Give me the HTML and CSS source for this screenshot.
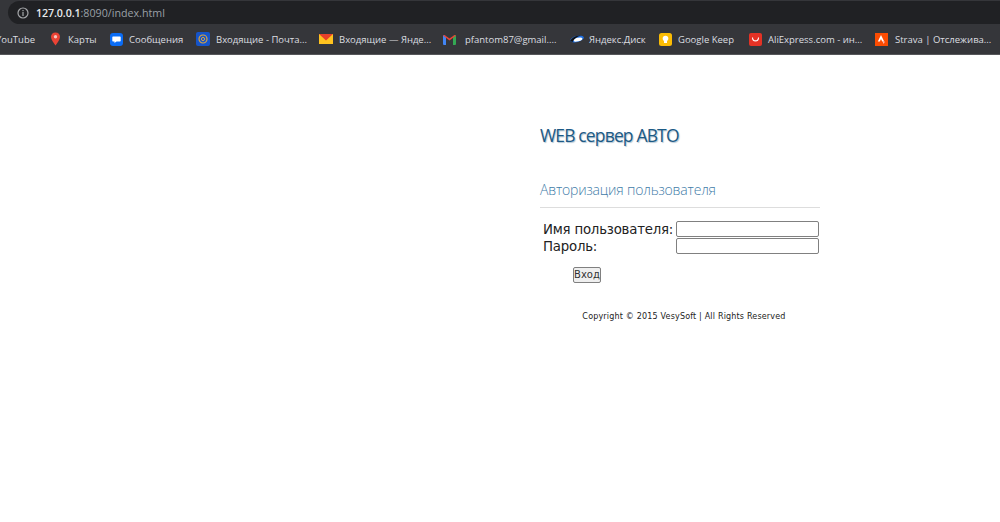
FILE: index.html
```html
<!DOCTYPE html>
<html lang="ru">
<head>
<meta charset="utf-8">
<title>WEB сервер АВТО</title>
<link rel="stylesheet" href="styles.css">
</head>
<body>
<header class="chrome">
  <div class="address-row">
    <div class="omnibox">
      <svg class="info" viewBox="0 0 12 12" width="12" height="12"><circle cx="6" cy="6" r="5" fill="none" stroke="#a5a7aa" stroke-width="1.2"/><rect x="5.4" y="5" width="1.2" height="4" fill="#a5a7aa"/><rect x="5.4" y="3" width="1.2" height="1.2" fill="#a5a7aa"/></svg>
      <span class="url"><b>127.0.0.1</b>:8090/index.html</span>
    </div>
  </div>
  <nav class="bookmarks">
    <a class="bm bm-yt"><span>YouTube</span></a>
    <a class="bm w-maps"><svg viewBox="0 0 13 14" width="13" height="14"><path d="M6.5 0.5C3.7 0.5 2 2.5 2 4.8 2 8 6.5 13.5 6.5 13.5S11 8 11 4.8C11 2.5 9.3 0.5 6.5 0.5z" fill="#ea4335"/><circle cx="6.5" cy="4.8" r="1.7" fill="#f6c6c0"/></svg><span>Карты</span></a>
    <a class="bm w-msg"><svg viewBox="0 0 13 13" width="13" height="13"><rect width="13" height="13" rx="3" fill="#0a6cf5"/><path d="M3 3.5h7a.7.7 0 0 1 .7.7v3.6a.7.7 0 0 1-.7.7H6.5L4.5 10V8.500H3a.7.7 0 0 1-.7-.7V4.200A.7.7 0 0 1 3 3.500z" fill="#fff"/></svg><span>Сообщения</span></a>
    <a class="bm w-mail"><svg viewBox="0 0 14 14" width="14" height="14"><rect width="14" height="14" rx="2" fill="#1554c9"/><circle cx="7" cy="7" r="4" fill="none" stroke="#d9a441" stroke-width="1.2"/><circle cx="7" cy="7" r="1.6" fill="none" stroke="#d9a441" stroke-width="1"/></svg><span>Входящие - Почта...</span></a>
    <a class="bm w-yamail"><svg viewBox="0 0 14 12" width="14" height="12"><rect y="1" width="14" height="10" fill="#ffc31f"/><path d="M0 1h14L7 7.500z" fill="#e8402a"/></svg><span>Входящие — Янде...</span></a>
    <a class="bm w-gmail"><svg viewBox="0 0 13 11" width="13" height="11"><path d="M0 1.500 1.500 1 3 2.500V11H1a1 1 0 0 1-1-1z" fill="#4285f4"/><path d="M13 1.500 11.500 1 10 2.500V11h2a1 1 0 0 0 1-1z" fill="#34a853"/><path d="M0 1.500 6.500 6.500 13 1.500 11.500 1 6.500 4.500 1.500 1z" fill="#ea4335"/></svg><span>pfantom87@gmail....</span></a>
    <a class="bm w-disk"><svg viewBox="0 0 14 8" width="14" height="8"><ellipse cx="7" cy="4" rx="7" ry="3" fill="#1f6fe0" transform="rotate(-14 7 4)"/><ellipse cx="8" cy="4.600" rx="4.500" ry="1.800" fill="#fff" transform="rotate(-14 8 4.600)"/><path d="M0 6C3 1.500 7 .5 11 .5 7 1.500 4 4 2.500 7z" fill="#111"/></svg><span>Яндекс.Диск</span></a>
    <a class="bm w-keep"><svg viewBox="0 0 13 13" width="13" height="13"><rect width="13" height="13" rx="2.500" fill="#fbbc04"/><circle cx="6.500" cy="5.500" r="2.800" fill="#fff"/><rect x="5" y="8" width="3" height="2" fill="#fff"/></svg><span>Google Keep</span></a>
    <a class="bm w-ali"><svg viewBox="0 0 13 13" width="13" height="13"><rect width="13" height="13" rx="2" fill="#e43225"/><path d="M3.500 4.500C3.500 9 9.500 9 9.500 4.500" fill="none" stroke="#fff" stroke-width="1.100"/></svg><span>AliExpress.com - ин...</span></a>
    <a class="bm w-strava"><svg viewBox="0 0 13 13" width="13" height="13"><rect width="13" height="13" fill="#fc4c02"/><path d="M6 2 2.800 8.500h2L6 6l1.200 2.500h2z" fill="#fff"/><path d="M7.500 8.500 8.700 11l1.200-2.500z" fill="#fbb"/></svg><span>Strava | Отслежива...</span></a>
  </nav>
</header>
<main class="page">
  <section class="panel">
    <h1 class="title">WEB сервер АВТО</h1>
    <h2 class="subtitle">Авторизация пользователя</h2>
    <form class="login">
      <div class="fields">
        <label class="lbl" for="u">Имя пользователя:</label><input class="inp" id="u" type="text">
        <label class="lbl" for="p">Пароль:</label><input class="inp" id="p" type="password">
      </div>
      <button class="btn" type="button">Вход</button>
    </form>
    <p class="copy">Copyright © 2015 VesySoft | All Rights Reserved</p>
  </section>
</main>
</body>
</html>
```
FILE: styles.css
```css
* { box-sizing: border-box; }
html, body { margin: 0; padding: 0; height: 100%; overflow: hidden; background: #fff; }
body { font-family: "DejaVu Sans", sans-serif; }

.chrome { height: 55px; background: #35363a; border-bottom: 1px solid #56575a; }
.address-row { height: 24px; padding: 1px 0 0 8px; }
.omnibox { height: 23px; background: #202124; border-radius: 12px 0 0 12px; display: flex; align-items: center; padding-left: 9px; gap: 7px; }
.url { font: 10.7px "Open Sans", sans-serif; color: #9aa0a6; }
.url b { font-weight: 600; color: #e8eaed; letter-spacing: -0.1px; }

.bookmarks { height: 30px; display: flex; align-items: center; overflow: hidden; font: 9.500px "Open Sans", sans-serif; color: #dcdee0; }
.bm { display: flex; align-items: center; gap: 7px; flex: none; white-space: nowrap; }
.bm svg { flex: none; }
.bm-yt { width: 53px; margin-left: -4px; }
.w-maps { width: 61px; gap: 6px; }
.w-msg { width: 86px; gap: 6px; }
.w-mail { width: 123px; gap: 6px; }
.w-yamail { width: 124px; gap: 6px; }
.w-gmail { width: 127px; gap: 9px; }
.w-disk { width: 89px; gap: 5px; }
.w-keep { width: 90px; gap: 6px; }
.w-ali { width: 126px; gap: 6px; }
.w-strava { width: 125px; gap: 7px; }

.page { padding-left: 540px; }
.panel { width: 280px; }
.title { margin: 0; padding-top: 67px; font: 400 17.500px/27px "Open Sans", sans-serif; letter-spacing: -0.85px; color: #1c5a85; text-shadow: 1px 1px 1px #b5c6d3; }
.subtitle { margin: 27px 0 0; height: 32px; font: 300 14px/27px "Open Sans", sans-serif; letter-spacing: -0.18px; color: #3f7ca8; border-bottom: 1px solid #ddd; }
.login { padding: 13px 1px 0 3px; }
.fields { display: grid; grid-template-columns: 133px 143px; grid-auto-rows: 16px; row-gap: 1px; }
.lbl { font-size: 13.330px; line-height: 16px; color: #222; letter-spacing: -0.22px; white-space: nowrap; padding-top: 1px; }
.inp { width: 143px; height: 16px; margin: 0; padding: 0 2px; border: 1px solid #808080; border-radius: 2px; background: #fff; }
.btn { display: block; margin: 13px 0 0 30px; width: 28px; height: 16px; padding: 0; font: 10px/14px "DejaVu Sans", sans-serif; color: #333; background: #efefef; border: 1px solid #808080; border-radius: 2px; }
.copy { margin: 28px 0 0; text-align: center; font-size: 8px; line-height: 12px; letter-spacing: 0.18px; color: #222; padding-left: 8px; }
```
